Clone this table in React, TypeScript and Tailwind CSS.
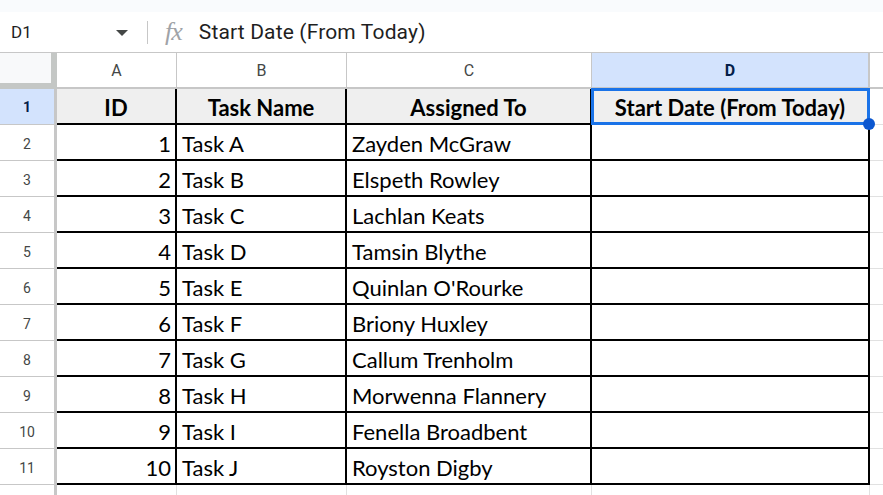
import React from "react";

const rows: [number, string, string][] = [
  [1, "Task A", "Zayden McGraw"],
  [2, "Task B", "Elspeth Rowley"],
  [3, "Task C", "Lachlan Keats"],
  [4, "Task D", "Tamsin Blythe"],
  [5, "Task E", "Quinlan O'Rourke"],
  [6, "Task F", "Briony Huxley"],
  [7, "Task G", "Callum Trenholm"],
  [8, "Task H", "Morwenna Flannery"],
  [9, "Task I", "Fenella Broadbent"],
  [10, "Task J", "Royston Digby"],
];

const cellFont = { fontFamily: "Lato, 'Open Sans', sans-serif" };

export default function App() {
  return (
    <div className="w-[883px] h-[495px] overflow-hidden bg-white" style={{ fontFamily: "Roboto, sans-serif" }}>
      {/* top strip */}
      <div className="h-[12px] bg-[#f9fbfd]" />
      {/* formula bar */}
      <div className="h-[41px] flex items-center border-b border-[#c7c7c7] bg-white">
        <div className="w-[135px] pl-[11px] pt-[2px] flex items-center justify-between pr-[6px]">
          <span className="text-[17px] text-[#1f1f1f]">D1</span>
          <svg width="12" height="6" viewBox="0 0 12 6" className="mr-[1px]">
            <path d="M0 0 L12 0 L6 6 Z" fill="#444746" />
          </svg>
        </div>
        <div className="w-px h-[23px] bg-[#c7c7c7] ml-[12px]" />
        <span
          className="ml-[17px] text-[26px] leading-none italic text-[#a0a3a7] tracking-[-1px]"
          style={{ fontFamily: "'Liberation Serif', serif" }}
        >
          fx
        </span>
        <span className="ml-[17px] pt-[2px] text-[21px] tracking-[0.15px] text-[#1f1f1f]">Start Date (From Today)</span>
      </div>
      {/* grid */}
      <div className="grid grid-cols-[57px_120px_170px_245px_278px_1fr] auto-rows-[36px]">
        {/* column header row */}
        <div className="bg-[#f8f9fa] border-r-[6px] border-b-[6px] border-[#c4c7c5]" />
        {["A", "B", "C"].map((l) => (
          <div
            key={l}
            className="flex items-center justify-center pt-[2px] border-r border-b-2 border-[#c7c7c7] text-[16px] text-[#444746]"
          >
            {l}
          </div>
        ))}
        <div className="flex items-center justify-center pt-[2px] border-r-2 border-b-2 border-[#c7c7c7] bg-[#d3e3fd] text-[16px] font-bold text-[#041e49]">
          D
        </div>
        <div className="border-b-2 border-[#c7c7c7]" />

        {/* row 1 */}
        <div className="flex items-center justify-center pt-[2px] bg-[#d3e3fd] border-r-[3px] border-b border-[#c7c7c7] text-[14px] font-bold text-[#041e49]">
          1
        </div>
        {["ID", "Task Name", "Assigned To"].map((h) => (
          <div
            key={h}
            className="flex items-center justify-center pt-[3px] bg-[#efefef] border-r-2 border-b-2 border-black text-[22px] font-bold text-black"
            style={cellFont}
          >
            {h}
          </div>
        ))}
        <div
          className="relative flex items-center justify-center pt-[3px] bg-[#efefef] border-r-2 border-b-2 border-black text-[22px] font-bold text-black"
          style={cellFont}
        >
          Start Date (From Today)
          <div className="absolute -left-px -top-px -right-[2px] -bottom-[2px] border-[3px] border-[#1a73e8]" />
          <div className="absolute -right-[7px] -bottom-[7px] w-[12px] h-[12px] rounded-full bg-[#0b57d0] z-10" />
        </div>
        <div className="border-b border-[#e1e1e1]" />

        {rows.map(([id, task, who], i) => (
          <React.Fragment key={id}>
            <div className="flex items-center justify-center pt-[3px] border-r-[3px] border-b border-[#c7c7c7] text-[14px] text-[#444746]">
              {i + 2}
            </div>
            <div
              className="flex items-center justify-end pt-[3px] pr-[4px] border-r-2 border-b-2 border-black text-[22px] text-black"
              style={cellFont}
            >
              {id}
            </div>
            <div
              className="flex items-center pt-[3px] pl-[5px] border-r-2 border-b-2 border-black text-[22px] text-black"
              style={cellFont}
            >
              {task}
            </div>
            <div
              className="flex items-center pt-[3px] pl-[5px] border-r-2 border-b-2 border-black text-[22px] text-black"
              style={cellFont}
            >
              {who}
            </div>
            <div className="border-r-2 border-b-2 border-black" />
            <div className="border-b border-[#e1e1e1]" />
          </React.Fragment>
        ))}

        {/* row 12 partial */}
        <div className="border-r-[3px] border-[#c7c7c7]" />
        <div className="border-r border-[#e1e1e1]" />
        <div className="border-r border-[#e1e1e1]" />
        <div className="border-r border-[#e1e1e1]" />
        <div className="border-r border-[#e1e1e1]" />
        <div />
      </div>
    </div>
  );
}
